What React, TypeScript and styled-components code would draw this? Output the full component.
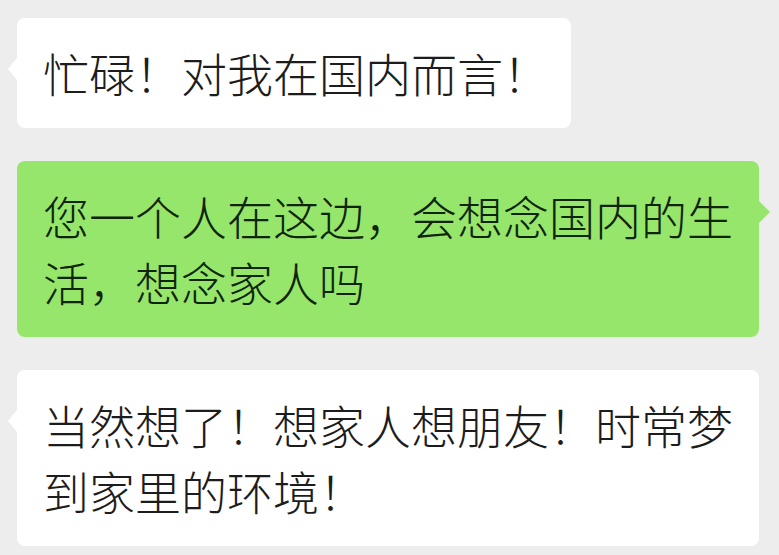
import styled, { createGlobalStyle } from "styled-components";

const GlobalStyle = createGlobalStyle`
  html, body {
    margin: 0;
    padding: 0;
    background: #ededed;
  }
`;

type Side = "left" | "right";

export default function App() {
  return (
    <>
      <GlobalStyle />
      <Chat>
        <Row side="left">
          <Bubble side="left">忙碌！对我在国内而言！</Bubble>
        </Row>
        <Row side="right">
          <Bubble side="right">您一个人在这边，会想念国内的生活，想念家人吗</Bubble>
        </Row>
        <Row side="left">
          <Bubble side="left" $wide>
            当然想了！想家人想朋友！时常梦到家里的环境！
          </Bubble>
        </Row>
      </Chat>
    </>
  );
}

const Chat = styled.div`
  display: flex;
  flex-direction: column;
  gap: 33px;
  padding: 18px 20px 10px 17px;
  width: 779px;
  height: 555px;
  box-sizing: border-box;
  overflow: hidden;
  font-family: "Noto Sans CJK SC", "Noto Sans", sans-serif;
`;

const Row = styled.div<{ side: Side }>`
  display: flex;
  justify-content: ${(p) => (p.side === "left" ? "flex-start" : "flex-end")};
`;

const Bubble = styled.div<{ side: Side; $wide?: boolean }>`
  position: relative;
  box-sizing: border-box;
  max-width: 743px;
  ${(p) => (p.$wide ? "width: 743px;" : "")}
  padding: 21px 22px 23px 26px;
  border-radius: 8px;
  font-size: 46px;
  font-weight: 300;
  line-height: 66px;
  color: ${(p) => (p.side === "left" ? "#1c1c1c" : "#10240a")};
  background: ${(p) => (p.side === "left" ? "#ffffff" : "#95e66b")};

  &::after {
    content: "";
    position: absolute;
    top: 40px;
    ${(p) => (p.side === "left" ? "left: -9px;" : "right: -11px;")}
    border-top: 11px solid transparent;
    border-bottom: 11px solid transparent;
    ${(p) =>
      p.side === "left"
        ? "border-right: 9px solid #ffffff;"
        : "border-left: 11px solid #95e66b;"}
  }
`;
